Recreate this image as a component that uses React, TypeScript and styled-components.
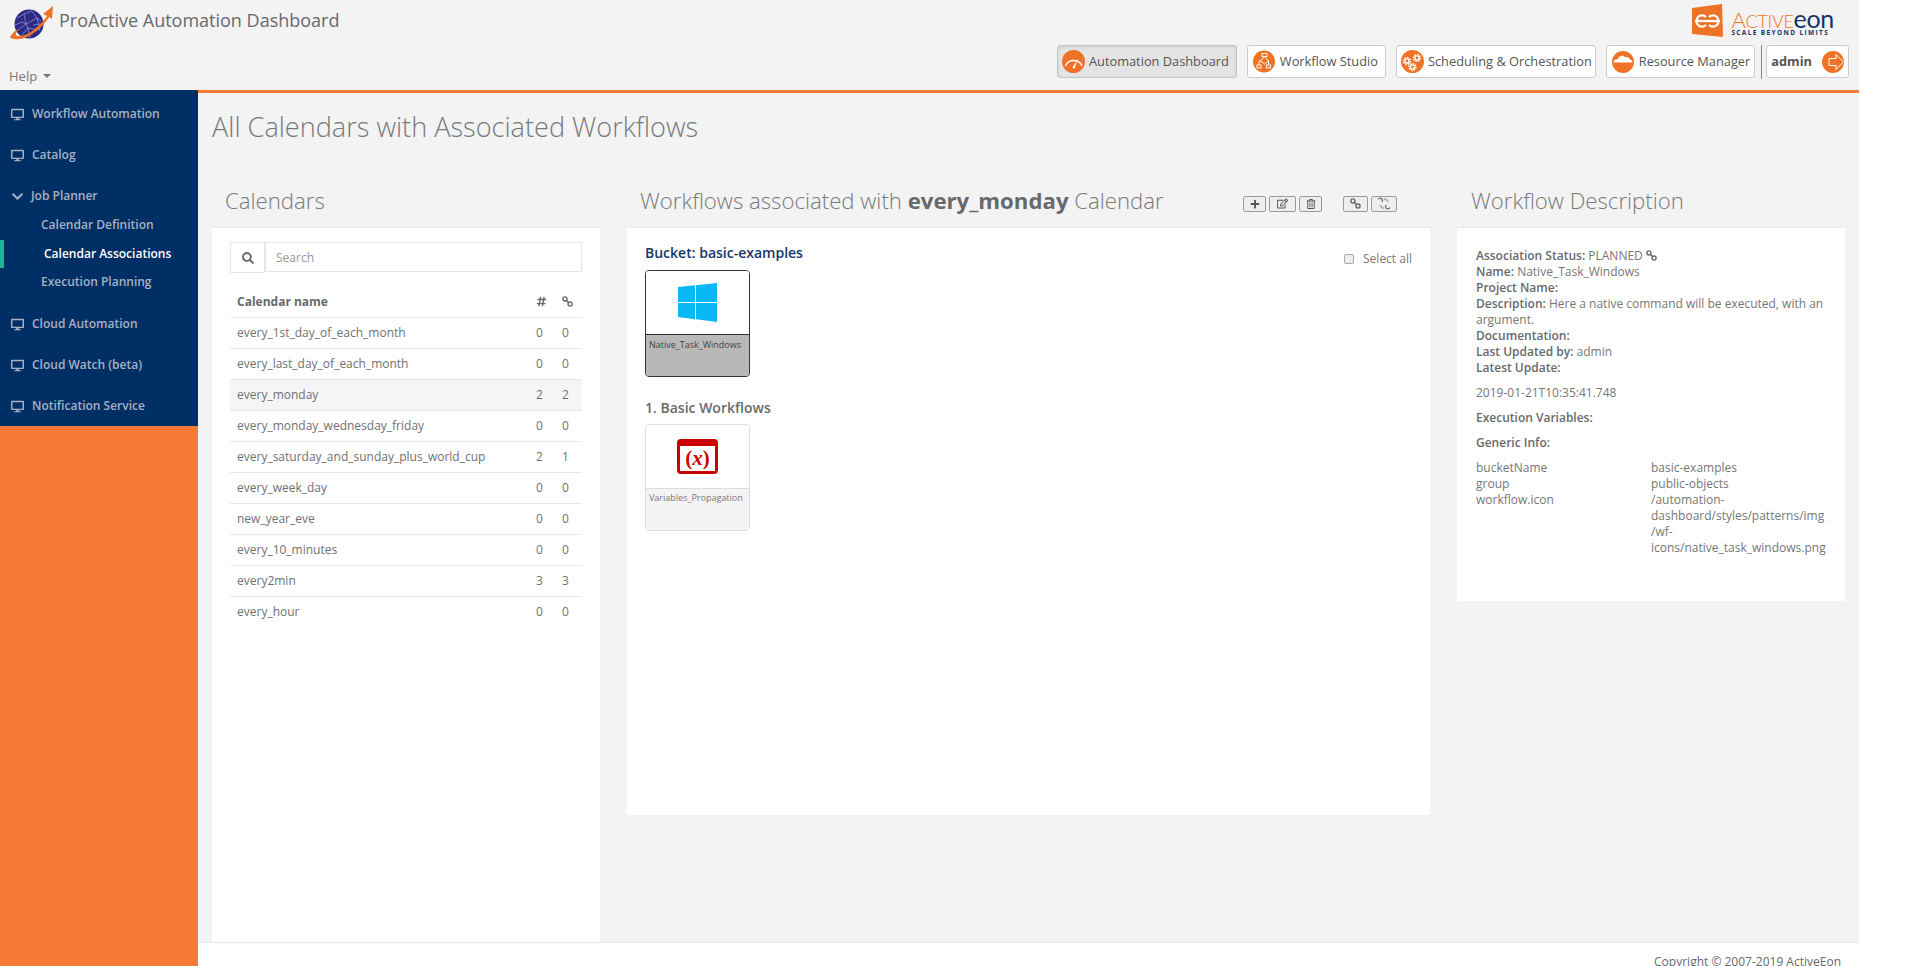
import React from 'react';
import styled, { createGlobalStyle } from 'styled-components';
import { FaDesktop, FaChevronDown, FaSearch, FaPlus, FaRegEdit, FaRegTrashAlt, FaHashtag } from 'react-icons/fa';

const GlobalStyle = createGlobalStyle`
  html, body {
    margin: 0;
    padding: 0;
    height: 100%;
    background: #fff;
    overflow: hidden;
  }
  body {
    font-family: "Open Sans", "Liberation Sans", sans-serif;
    color: #676a6c;
    font-size: 13px;
  }
  * { box-sizing: border-box; }
`;

const Page = styled.div`
  width: 1859px;
  height: 966px;
  display: flex;
  flex-direction: column;
  overflow: hidden;
  background: #f3f3f3;
`;

const Header = styled.header`
  height: 90px;
  flex: none;
  display: flex;
  justify-content: space-between;
  background: #f3f3f3;
`;

const HeaderLeft = styled.div`
  display: flex;
  flex-direction: column;
  justify-content: space-between;
  padding: 6px 0 5px 10px;
`;

const Brand = styled.div`
  display: flex;
  align-items: flex-start;
  gap: 5px;
`;

const AppName = styled.span`
  font-size: 18px;
  line-height: 26px;
  margin-top: 1px;
  color: #676a6c;
`;

const HelpMenu = styled.div`
  display: flex;
  align-items: center;
  gap: 6px;
  margin-left: -1px;
  font-size: 13px;
  line-height: 18px;
  color: #777;
`;

const Caret = styled.span`
  width: 0;
  height: 0;
  border-left: 4px solid transparent;
  border-right: 4px solid transparent;
  border-top: 4px solid #777;
`;

const HeaderRight = styled.div`
  display: flex;
  flex-direction: column;
  align-items: flex-end;
  padding: 4px 10px 0 0;
`;

const Logo = styled.div`
  display: flex;
  align-items: flex-start;
  gap: 7px;
  height: 41px;
  margin-right: 15px;
`;

const LogoText = styled.div`
  display: flex;
  flex-direction: column;
  margin-top: 4px;
`;

const LogoWord = styled.div`
  font-family: "Lato", sans-serif;
  font-weight: 300;
  font-size: 18px;
  line-height: 21px;
  height: 21px;
  letter-spacing: -0.3px;
  color: #ee7326;
  white-space: nowrap;
`;

const LogoCap = styled.span`
  font-size: 22px;
`;

const LogoEon = styled.span`
  font-size: 25px;
  font-weight: 400;
  letter-spacing: -0.3px;
  color: #14336b;
`;

const LogoTag = styled.div`
  font-family: "Open Sans", sans-serif;
  font-weight: 700;
  font-size: 6.5px;
  line-height: 8px;
  letter-spacing: 1.37px;
  color: #14336b;
  white-space: nowrap;
`;

const AppBar = styled.nav`
  display: flex;
  align-items: center;
  height: 33px;
`;

const AppButton = styled.a<{ $active?: boolean; $gap: number; $left: number; $right: number; $bold?: boolean }>`
  display: flex;
  align-items: center;
  height: 33px;
  gap: ${(p) => p.$gap}px;
  padding: 0 ${(p) => p.$right}px 0 ${(p) => p.$left}px;
  margin-left: 10px;
  border: 1px solid ${(p) => (p.$active ? '#c4c4c4' : '#ccc')};
  border-radius: 3px;
  background: ${(p) => (p.$active ? '#e4e4e4' : '#fff')};
  box-shadow: ${(p) => (p.$active ? 'inset 0 1px 3px rgba(0,0,0,0.13)' : 'none')};
  font-size: 12.8px;
  font-weight: ${(p) => (p.$bold ? 700 : 400)};
  color: #555;
  white-space: nowrap;
`;

const ButtonText = styled.span`
  margin-top: -2px;
`;

const BarDivider = styled.span`
  width: 1px;
  height: 34px;
  margin: 0 -6px 0 6px;
  background: #888;
`;

const Body = styled.div`
  flex: 1;
  display: flex;
  min-height: 0;
`;

const Sidebar = styled.aside`
  width: 198px;
  flex: none;
  background: #f67935;
`;

const Nav = styled.ul`
  list-style: none;
  margin: 0;
  padding: 1px 0 2px;
  background: #002f66;
`;

const NavLink = styled.a<{ $open?: boolean }>`
  display: flex;
  align-items: center;
  padding: ${(p) => (p.$open ? '14px 0 0 11px' : '14px 0 9px 11px')};
  gap: ${(p) => (p.$open ? '7px' : '8px')};
  font-size: 12px;
  line-height: 18px;
  font-weight: 600;
  color: #a7b1c2;
  svg { flex: none; }
`;

const SubMenu = styled.ul`
  list-style: none;
  margin: 0;
  padding: 6px 0 4.5px;
`;

const SubLink = styled.a<{ $active?: boolean }>`
  display: block;
  height: 28.5px;
  line-height: 28px;
  padding-left: ${(p) => (p.$active ? '40px' : '41px')};
  border-left: ${(p) => (p.$active ? '4px solid #1ab394' : 'none')};
  font-size: 12px;
  font-weight: 600;
  color: ${(p) => (p.$active ? '#fff' : '#a7b1c2')};
`;

const Main = styled.main`
  flex: 1;
  min-width: 0;
  display: flex;
  flex-direction: column;
  border-top: 3px solid #f47a30;
`;

const PageTitle = styled.h2`
  margin: 0;
  padding: 17px 14px 0;
  height: 85px;
  font-size: 27.1px;
  line-height: 34px;
  font-weight: 300;
  color: #77797b;
`;

const Columns = styled.div`
  flex: 1;
  min-height: 0;
  display: grid;
  grid-template-columns: 388px 803px 388px;
  gap: 27px;
  padding: 0 14px;
`;

const Column = styled.section`
  display: flex;
  flex-direction: column;
  min-height: 0;
`;

const HeadRow = styled.div<{ $inset: number }>`
  height: 49px;
  flex: none;
  display: flex;
  align-items: center;
  padding: 0 0 3px ${(p) => p.$inset}px;
`;

const Heading = styled.h3`
  margin: 0;
  font-size: 22.2px;
  line-height: 30px;
  font-weight: 300;
  color: #77797b;
  white-space: nowrap;
  b { font-weight: 700; color: #676a6c; }
`;

const Toolbar = styled.div`
  display: flex;
  gap: 3px;
  margin: 5px 33px 0 auto;
`;

const ToolSpacer = styled.span`
  width: 15px;
`;

const ToolButton = styled.button<{ $width: number }>`
  width: ${(p) => p.$width}px;
  height: 16px;
  padding: 0;
  display: flex;
  align-items: center;
  justify-content: center;
  background: #eee;
  border: 1px solid #999;
  border-radius: 2px;
  color: #555;
`;

const Panel = styled.div<{ $height?: number; $fill?: boolean }>`
  background: #fff;
  border-top: 1px solid #e7eaec;
  ${(p) => (p.$height ? `height: ${p.$height}px;` : '')}
  ${(p) => (p.$fill ? 'flex: 1;' : '')}
`;

const CalendarBody = styled(Panel)`
  padding: 14px 18px 0;
`;

const SearchRow = styled.div`
  display: flex;
  align-items: flex-start;
  margin-bottom: 14px;
`;

const SearchAddon = styled.span`
  width: 35px;
  height: 31px;
  display: flex;
  align-items: center;
  justify-content: center;
  border: 1px solid #e5e6e7;
  color: #676a6c;
`;

const SearchInput = styled.input`
  flex: 1;
  height: 30px;
  padding: 0 10px;
  border: 1px solid #e5e6e7;
  font: 12px "Open Sans", sans-serif;
  color: #676a6c;
  outline: none;
  &::placeholder { color: #999; opacity: 1; }
`;

const CalendarTable = styled.table`
  width: 100%;
  border-collapse: collapse;
  table-layout: fixed;
  font-size: 12px;
`;

const HeadCell = styled.th<{ $w?: number }>`
  ${(p) => (p.$w ? `width: ${p.$w}px;` : '')}
  height: 30px;
  padding: 0 7px;
  text-align: left;
  font-weight: 700;
  border-bottom: 1px solid #e7eaec;
  svg { display: block; }
`;

const Row = styled.tr<{ $selected?: boolean }>`
  background: ${(p) => (p.$selected ? '#f5f5f5' : 'transparent')};
  &:last-child td { border-bottom: none; }
`;

const Cell = styled.td`
  height: 31px;
  padding: 0 7px;
  border-bottom: 1px solid #e7eaec;
  color: #6f7173;
`;

const WorkflowBody = styled(Panel)`
  padding: 15px 18px 0;
  position: relative;
`;

const SelectAll = styled.label`
  position: absolute;
  top: 23px;
  right: 18px;
  display: flex;
  align-items: center;
  gap: 9px;
  font-size: 12px;
  line-height: 16px;
  color: #777;
`;

const TickBox = styled.span`
  width: 10px;
  height: 10px;
  border: 1px solid #aaa;
  border-radius: 2px;
  background: #eee;
`;

const GroupTitle = styled.div<{ $bucket?: boolean }>`
  font-size: 14px;
  line-height: 20px;
  font-weight: 600;
  color: ${(p) => (p.$bucket ? '#16366e' : '#676a6c')};
  margin-bottom: ${(p) => (p.$bucket ? '7px' : '6px')};
`;

const CardGrid = styled.div`
  display: flex;
  margin-bottom: 21px;
`;

const WorkflowCard = styled.div<{ $selected?: boolean }>`
  width: 105px;
  height: 107px;
  display: flex;
  flex-direction: column;
  border: 1px solid ${(p) => (p.$selected ? '#333' : '#ddd')};
  border-radius: 4px;
  overflow: hidden;
`;

const CardIcon = styled.div<{ $selected?: boolean }>`
  height: 64px;
  flex: none;
  display: flex;
  align-items: center;
  justify-content: center;
  background: #fff;
  border-bottom: 1px solid ${(p) => (p.$selected ? '#333' : '#ddd')};
`;

const CardLabel = styled.div<{ $selected?: boolean }>`
  flex: 1;
  padding: ${(p) => (p.$selected ? '4px' : '3px')} 3px;
  font-size: 9px;
  line-height: 12px;
  white-space: nowrap;
  color: ${(p) => (p.$selected ? '#444' : '#777')};
  background: ${(p) => (p.$selected ? '#b8b8b8' : '#f4f4f4')};
`;

const DescriptionBody = styled(Panel)`
  padding: 20px 18px 45px 19px;
  font-size: 12px;
  line-height: 16px;
  color: #777;
  b { font-weight: 600; color: #676a6c; }
`;

const InfoLine = styled.div`
  svg { vertical-align: -1px; }
`;

const InfoBlock = styled.div`
  margin-top: 9px;
`;

const InfoGrid = styled.div`
  margin-top: 9px;
  display: grid;
  grid-template-columns: 175px 1fr;
`;

const InfoValue = styled.span`
  word-break: break-word;
  overflow-wrap: break-word;
`;

const Footer = styled.footer`
  height: 24px;
  flex: none;
  padding: 10px 18px 0 0;
  text-align: right;
  background: #fff;
  border-top: 1px solid #e7eaec;
  font-size: 12px;
  line-height: 18px;
  color: #676a6c;
  overflow: hidden;
`;

const ORANGE = '#ee7326';

const PlanetLogo = () => (
  <svg width="44" height="34" viewBox="0 0 44 34">
    <circle cx="19" cy="18" r="14.5" fill="#2c2a85" />
    <g stroke="#9aa0d8" strokeWidth="0.7" fill="none">
      <path d="M7 12 L14 8 L22 5 M8 24 L16 18 L27 12 L31 15 M12 29 L18 22 L30 24 M14 8 L16 18 L18 22 L20 32 M22 5 L27 12 L30 24" />
      <path d="M5 19 L12 16 L16 18 M23 19 L31 18" />
    </g>
    <path d="M0 31 C3 26 6 24 9 23 C5 28 5 30 8 30 C18 31 30 20 37 10 L33 8 L43 0 L42 13 L39 11 C31 24 16 35 5 33 C2 33 0 32 0 31 Z" fill="#ee7326" />
  </svg>
);

const ActiveeonMark = () => (
  <svg width="33" height="33" viewBox="0 0 33 33">
    <path d="M1 4 L31 0 L32 33 L1 30 Z" fill="#ee7326" />
    <g stroke="#fff" strokeWidth="2.3" fill="none">
      <path d="M15 13 A5.6 5.6 0 1 0 15 21 " />
      <path d="M18 13 A5.6 5.6 0 1 1 18 21" />
      <path d="M4 17 H29" />
    </g>
  </svg>
);

const GaugeIcon = () => (
  <svg width="23" height="23" viewBox="0 0 23 23">
    <circle cx="11.5" cy="11.5" r="11.5" fill={ORANGE} />
    <path d="M3.4 16 A9 9 0 0 1 20 16" stroke="#fff" strokeWidth="1.3" fill="none" />
    <path d="M10.4 18 L15.6 9 L12.6 18.6 Z" fill="#fff" />
  </svg>
);

const FlowIcon = () => (
  <svg width="22" height="23" viewBox="0 0 22 23">
    <circle cx="11" cy="11.5" r="11" fill={ORANGE} />
    <g stroke="#fff" strokeWidth="0.9" fill="none">
      <rect x="9" y="3.5" width="5" height="3" />
      <path d="M11.5 6.5 L15.5 11 L11.5 14 L7.5 11 Z" />
      <rect x="4" y="15" width="4" height="3" />
      <rect x="13.5" y="15" width="4" height="3" />
      <path d="M6 15 V11 H7.5 M15.5 11 V15" />
    </g>
  </svg>
);

const Gear = ({ x, y, r }: { x: number; y: number; r: number }) => (
  <g>
    <circle cx={x} cy={y} r={r} fill="none" stroke="#fff" strokeWidth="1.6" strokeDasharray="1.5 1.1" />
    <circle cx={x} cy={y} r={r * 0.62} fill="none" stroke="#fff" strokeWidth="1.4" />
  </g>
);

const GearsIcon = () => (
  <svg width="23" height="23" viewBox="0 0 23 23">
    <circle cx="11.5" cy="11.5" r="11.5" fill={ORANGE} />
    <Gear x={6} y={11} r={3.4} />
    <Gear x={16} y={8} r={3.4} />
    <Gear x={11.5} y={17} r={3.4} />
  </svg>
);

const CloudIcon = () => (
  <svg width="22" height="22" viewBox="0 0 22 22">
    <circle cx="11" cy="11" r="11" fill={ORANGE} />
    <path d="M1.5 11.5 C2 8.5 4 8 5.5 8.5 C6.5 4.5 11.5 3.5 13.5 6.5 C15.5 5.5 17.5 6.5 18 8.5 C19.5 8.5 20.5 10 20.5 11.5 Z" fill="#fff" />
  </svg>
);

const LogoutIcon = () => (
  <svg width="22" height="22" viewBox="0 0 22 22">
    <circle cx="11" cy="11" r="11" fill={ORANGE} />
    <path d="M7 7.5 H14 V3.5 L21.5 11 L14 18.5 V14.5 H7 Z" fill={ORANGE} stroke="#fff" strokeWidth="1" />
  </svg>
);

const LinkGlyph = ({ size = 12, color = '#666' }: { size?: number; color?: string }) => (
  <svg width={size} height={size} viewBox="0 0 12 12" fill="none" stroke={color} strokeWidth="1.5">
    <circle cx="3.2" cy="3.2" r="2.2" />
    <circle cx="8.8" cy="8.8" r="2.2" />
    <path d="M4.6 4.6 L7.4 7.4" />
  </svg>
);

const UnlinkGlyph = () => (
  <svg width="14" height="13" viewBox="0 0 14 13" fill="none" stroke="#666" strokeWidth="1.2">
    <path d="M1.5 2.5 C1.5 0.5 5 0.5 5.5 3 L5 5 M9 8 L8.5 10 C9 12.5 12.5 12.5 12.5 10.5" />
    <path d="M8 1 V3 M10 2 L9 3.5 M11.5 4 H9.5 M2.5 9 H4.5 M4 11 L5 9.5 M6 12 V10" strokeWidth="0.8" />
  </svg>
);

const WindowsLogo = () => (
  <svg width="39" height="39" viewBox="0 0 39 39">
    <path d="M0 4 L17 2.3 V19 H0 Z M18 2.2 L39 0 V19 H18 Z M0 20 H17 V36.2 L0 34 Z M18 20 H39 V39 L18 36.3 Z" fill="#0ab8f6" />
  </svg>
);

const VariableIcon = () => (
  <svg width="41" height="35" viewBox="0 0 41 35">
    <rect x="0" y="0" width="41" height="35" rx="4" fill="#cb0000" />
    <rect x="3" y="7" width="35" height="25" fill="#fff" />
    <text x="20.5" y="26" textAnchor="middle" fontFamily="Liberation Serif, serif" fontWeight="700" fontSize="21" fill="#cb0000">
      (<tspan fontStyle="italic">x</tspan>)
    </text>
  </svg>
);

const navTop = ['Workflow Automation', 'Catalog'];
const navSub = [
  { label: 'Calendar Definition' },
  { label: 'Calendar Associations', active: true },
  { label: 'Execution Planning' },
];
const navBottom = ['Cloud Automation', 'Cloud Watch (beta)', 'Notification Service'];

const calendars = [
  { name: 'every_1st_day_of_each_month', count: 0, linked: 0 },
  { name: 'every_last_day_of_each_month', count: 0, linked: 0 },
  { name: 'every_monday', count: 2, linked: 2, selected: true },
  { name: 'every_monday_wednesday_friday', count: 0, linked: 0 },
  { name: 'every_saturday_and_sunday_plus_world_cup', count: 2, linked: 1 },
  { name: 'every_week_day', count: 0, linked: 0 },
  { name: 'new_year_eve', count: 0, linked: 0 },
  { name: 'every_10_minutes', count: 0, linked: 0 },
  { name: 'every2min', count: 3, linked: 3 },
  { name: 'every_hour', count: 0, linked: 0 },
];

const genericInfo = [
  ['bucketName', 'basic-examples'],
  ['group', 'public-objects'],
  ['workflow.icon', '/automation-dashboard/styles/patterns/img/wf-icons/native_task_windows.png'],
];

const NavEntry = ({ label }: { label: string }) => (
  <li>
    <NavLink>
      <FaDesktop size={13} />
      {label}
    </NavLink>
  </li>
);

const App: React.FC = () => (
  <Page>
    <GlobalStyle />
    <Header>
      <HeaderLeft>
        <Brand>
          <PlanetLogo />
          <AppName>ProActive Automation Dashboard</AppName>
        </Brand>
        <HelpMenu>
          Help <Caret />
        </HelpMenu>
      </HeaderLeft>
      <HeaderRight>
        <Logo>
          <ActiveeonMark />
          <LogoText>
            <LogoWord>
              <LogoCap>A</LogoCap>CTIVE<LogoEon>eon</LogoEon>
            </LogoWord>
            <LogoTag>SCALE BEYOND LIMITS</LogoTag>
          </LogoText>
        </Logo>
        <AppBar>
          <AppButton $active $gap={4} $left={4} $right={7}>
            <GaugeIcon />
            <ButtonText>Automation Dashboard</ButtonText>
          </AppButton>
          <AppButton $gap={5} $left={5} $right={7}>
            <FlowIcon />
            <ButtonText>Workflow Studio</ButtonText>
          </AppButton>
          <AppButton $gap={4} $left={4} $right={3}>
            <GearsIcon />
            <ButtonText>Scheduling &amp; Orchestration</ButtonText>
          </AppButton>
          <AppButton $gap={5} $left={5} $right={4}>
            <CloudIcon />
            <ButtonText>Resource Manager</ButtonText>
          </AppButton>
          <BarDivider />
          <AppButton $gap={10} $left={4} $right={4} $bold>
            <ButtonText>admin</ButtonText>
            <LogoutIcon />
          </AppButton>
        </AppBar>
      </HeaderRight>
    </Header>
    <Body>
      <Sidebar>
        <Nav>
          {navTop.map((label) => (
            <NavEntry key={label} label={label} />
          ))}
          <li>
            <NavLink $open>
              <FaChevronDown size={13} />
              Job Planner
            </NavLink>
            <SubMenu>
              {navSub.map((item) => (
                <li key={item.label}>
                  <SubLink $active={item.active}>{item.label}</SubLink>
                </li>
              ))}
            </SubMenu>
          </li>
          {navBottom.map((label) => (
            <NavEntry key={label} label={label} />
          ))}
        </Nav>
      </Sidebar>
      <Main>
        <PageTitle>All Calendars with Associated Workflows</PageTitle>
        <Columns>
          <Column>
            <HeadRow $inset={13}>
              <Heading>Calendars</Heading>
            </HeadRow>
            <CalendarBody $fill>
              <SearchRow>
                <SearchAddon>
                  <FaSearch size={12} />
                </SearchAddon>
                <SearchInput placeholder="Search" />
              </SearchRow>
              <CalendarTable>
                <thead>
                  <tr>
                    <HeadCell>Calendar name</HeadCell>
                    <HeadCell $w={26}>
                      <FaHashtag size={11} />
                    </HeadCell>
                    <HeadCell $w={27}>
                      <LinkGlyph size={11} />
                    </HeadCell>
                  </tr>
                </thead>
                <tbody>
                  {calendars.map((c) => (
                    <Row key={c.name} $selected={c.selected}>
                      <Cell>{c.name}</Cell>
                      <Cell>{c.count}</Cell>
                      <Cell>{c.linked}</Cell>
                    </Row>
                  ))}
                </tbody>
              </CalendarTable>
            </CalendarBody>
          </Column>
          <Column>
            <HeadRow $inset={13}>
              <Heading>
                Workflows associated with <b>every_monday</b> Calendar
              </Heading>
              <Toolbar>
                <ToolButton $width={23}>
                  <FaPlus size={10} />
                </ToolButton>
                <ToolButton $width={27}>
                  <FaRegEdit size={11} />
                </ToolButton>
                <ToolButton $width={23}>
                  <FaRegTrashAlt size={10} />
                </ToolButton>
                <ToolSpacer />
                <ToolButton $width={25}>
                  <LinkGlyph size={11} />
                </ToolButton>
                <ToolButton $width={26}>
                  <UnlinkGlyph />
                </ToolButton>
              </Toolbar>
            </HeadRow>
            <WorkflowBody $height={588}>
              <SelectAll>
                <TickBox />
                Select all
              </SelectAll>
              <GroupTitle $bucket>Bucket: basic-examples</GroupTitle>
              <CardGrid>
                <WorkflowCard $selected>
                  <CardIcon $selected>
                    <WindowsLogo />
                  </CardIcon>
                  <CardLabel $selected>Native_Task_Windows</CardLabel>
                </WorkflowCard>
              </CardGrid>
              <GroupTitle>1. Basic Workflows</GroupTitle>
              <CardGrid>
                <WorkflowCard>
                  <CardIcon>
                    <VariableIcon />
                  </CardIcon>
                  <CardLabel>Variables_Propagation</CardLabel>
                </WorkflowCard>
              </CardGrid>
            </WorkflowBody>
          </Column>
          <Column>
            <HeadRow $inset={14}>
              <Heading>Workflow Description</Heading>
            </HeadRow>
            <DescriptionBody>
              <InfoLine>
                <b>Association Status:</b> PLANNED <LinkGlyph size={11} />
              </InfoLine>
              <InfoLine>
                <b>Name:</b> Native_Task_Windows
              </InfoLine>
              <InfoLine>
                <b>Project Name:</b>
              </InfoLine>
              <InfoLine>
                <b>Description:</b> Here a native command will be executed, with an argument.
              </InfoLine>
              <InfoLine>
                <b>Documentation:</b>
              </InfoLine>
              <InfoLine>
                <b>Last Updated by:</b> admin
              </InfoLine>
              <InfoLine>
                <b>Latest Update:</b>
              </InfoLine>
              <InfoBlock>2019-01-21T10:35:41.748</InfoBlock>
              <InfoBlock>
                <b>Execution Variables:</b>
              </InfoBlock>
              <InfoBlock>
                <b>Generic Info:</b>
              </InfoBlock>
              <InfoGrid>
                {genericInfo.map(([key, value]) => (
                  <React.Fragment key={key}>
                    <span>{key}</span>
                    <InfoValue>{value}</InfoValue>
                  </React.Fragment>
                ))}
              </InfoGrid>
            </DescriptionBody>
          </Column>
        </Columns>
        <Footer>Copyright © 2007-2019 ActiveEon</Footer>
      </Main>
    </Body>
  </Page>
);

export default App;
